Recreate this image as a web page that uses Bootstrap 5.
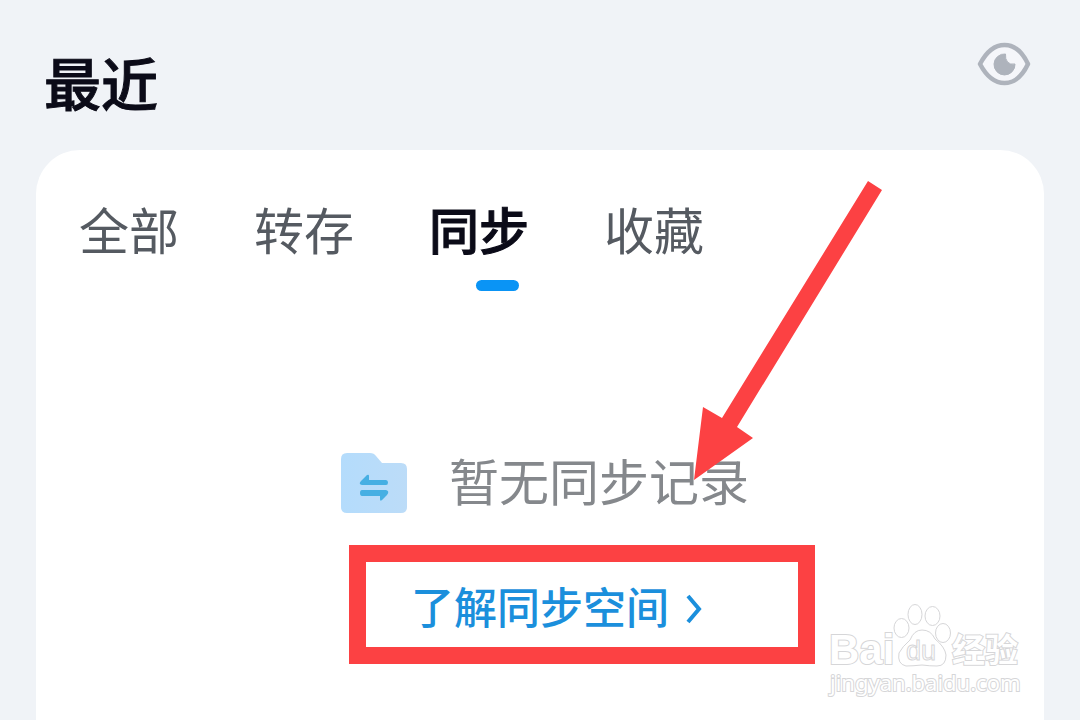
<!DOCTYPE html>
<html lang="zh-CN">
<head>
<meta charset="utf-8">
<meta name="viewport" content="width=device-width, initial-scale=1">
<title>最近</title>
<link href="https://cdn.jsdelivr.net/npm/bootstrap@5.3.0/dist/css/bootstrap.min.css" rel="stylesheet">
<style>
body { background: #f0f3f7; color: #0b0b18; font-family: "Liberation Sans", "Noto Sans CJK SC", sans-serif; }
.page-head { padding: 40px 48px 0 44px; height: 150px; }
.page-title { font-size: 57px; line-height: 92px; font-weight: 500; -webkit-text-stroke: 1px currentColor; }
.recent-card { margin: 0 36px; border-radius: 44px 44px 0 0; }
.recent-tabs { gap: 75px; padding: 44px 43px 0; }
.tab-btn { font-size: 50px; line-height: 78px; color: #555a61; }
.tab-btn.active { color: #0b0b18; font-weight: 500; -webkit-text-stroke: 1px currentColor; }
.tab-btn.active::after { content: ""; position: absolute; left: 47px; top: 86px; width: 43px; height: 11px; border-radius: 6px; background: #0a94f5; }
.empty-row { gap: 42px; margin-top: 170px; padding-left: 10px; }
.empty-text { font-size: 50px; line-height: 80px; padding-top: 2px; color: #85888c; }
.callout-box { width: 466px; margin: 21px 0 0 84px; padding: 9px 45px 0; border: 17px solid #fc4143; }
.learn-link { font-size: 43px; line-height: 76px; color: #1b8fdc; gap: 16px; font-weight: 500; }
.pointer-arrow { top: 30px; margin-left: 152px; }
.site-mark { right: 20px; bottom: 20px; }
.site-mark text, .site-mark ellipse, .site-mark path { fill: #fff; stroke: #d6d6d8; }
.mark-line { paint-order: stroke; stroke-width: 2px; }
</style>
</head>
<body class="min-vh-100 d-flex flex-column">
<header class="page-head d-flex justify-content-between align-items-start">
  <h1 class="page-title m-0">最近</h1>
  <button type="button" class="btn p-0 border-0 lh-1" aria-label="显示或隐藏">
    <svg width="56" height="48" viewBox="0 0 56 48" class="d-block">
      <path d="M4 24Q14 5 28.500 5T52 24Q43 43 28.500 43T4 24Z" fill="#f5f6fa" stroke="#aeb3bc" stroke-width="4.500" stroke-linejoin="round"/>
      <path d="M29.500 14A10.500 10.500 0 1 0 39 24Q34 25 31.500 22T29.500 14Z" fill="#aeb3bc" stroke="#aeb3bc" stroke-linejoin="round"/>
    </svg>
  </button>
</header>
<main class="recent-card bg-white flex-grow-1 position-relative">
  <nav class="recent-tabs d-flex">
    <button type="button" class="tab-btn btn p-0 border-0">全部</button>
    <button type="button" class="tab-btn btn p-0 border-0">转存</button>
    <button type="button" class="tab-btn btn p-0 border-0 active position-relative" aria-current="page">同步</button>
    <button type="button" class="tab-btn btn p-0 border-0">收藏</button>
  </nav>
  <section class="d-flex flex-column align-items-center">
    <div class="empty-row d-flex align-items-center">
      <svg width="66" height="60" viewBox="0 0 66 60">
        <defs><linearGradient id="folder" x2="1" y2="0"><stop stop-color="#b4dcfc"/><stop offset="1" stop-color="#bcdcf8"/></linearGradient></defs>
        <path d="M6 0H29Q33 0 35 3L41 10H60Q66 10 66 16V54Q66 60 60 60H6Q0 60 0 54V6Q0 0 6 0Z" fill="url(#folder)"/>
        <path d="M20 28L26 22Q28 21 28 23V27H45Q47 27 47 29.500T45 32H21Q17 31 20 28Z" fill="#46afe3"/>
        <path d="M21 37H45Q49 38 46 42L41 47Q39 49 39 46V43H21Q19 43 19 40T21 37Z" fill="#46afe3"/>
      </svg>
      <span class="empty-text">暂无同步记录</span>
    </div>
    <div class="callout-box">
      <a href="#" class="learn-link d-flex align-items-center text-decoration-none">了解同步空间
        <svg width="18" height="32" viewBox="0 0 18 32" fill="none" stroke="currentColor" stroke-width="4"><path d="M3 3L14 16L3 29"/></svg>
      </a>
    </div>
  </section>
  <svg class="pointer-arrow position-absolute start-50" width="192" height="302" viewBox="0 0 192 302" aria-hidden="true">
    <path d="M176 1L190 10L45 247L61 258L2 300L11 227L30 238Z" fill="#fc4143"/>
  </svg>
  <svg class="site-mark position-absolute" width="198" height="100" viewBox="0 0 198 100">
    <g font-family="Liberation Sans, Noto Sans CJK SC, sans-serif" font-weight="700">
      <text class="mark-line" x="3" y="64" font-size="42">Bai</text>
      <ellipse cx="75.500" cy="28" rx="7.500" ry="9.500"/><ellipse cx="89" cy="14.500" rx="7" ry="10"/>
      <ellipse cx="106.500" cy="16" rx="7.500" ry="9.500"/><ellipse cx="117" cy="33" rx="7.500" ry="9.500"/>
      <path d="M96 30Q105 30 109 39Q119 47 120 55Q120 66 111 66Q104 66 96 65Q86 66 80 66Q71 64 73 53Q76 47 84 40Q88 30 96 30Z"/>
      <text x="80" y="60" font-size="27" font-weight="400">du</text>
      <text class="mark-line" x="126" y="62" font-size="33">经验</text>
    </g>
    <text class="mark-line" x="4" y="91" font-size="22" font-family="Noto Sans, sans-serif">jingyan.baidu.com</text>
  </svg>
</main>
<script src="https://cdn.jsdelivr.net/npm/bootstrap@5.3.0/dist/js/bootstrap.bundle.min.js"></script>
</body>
</html>
